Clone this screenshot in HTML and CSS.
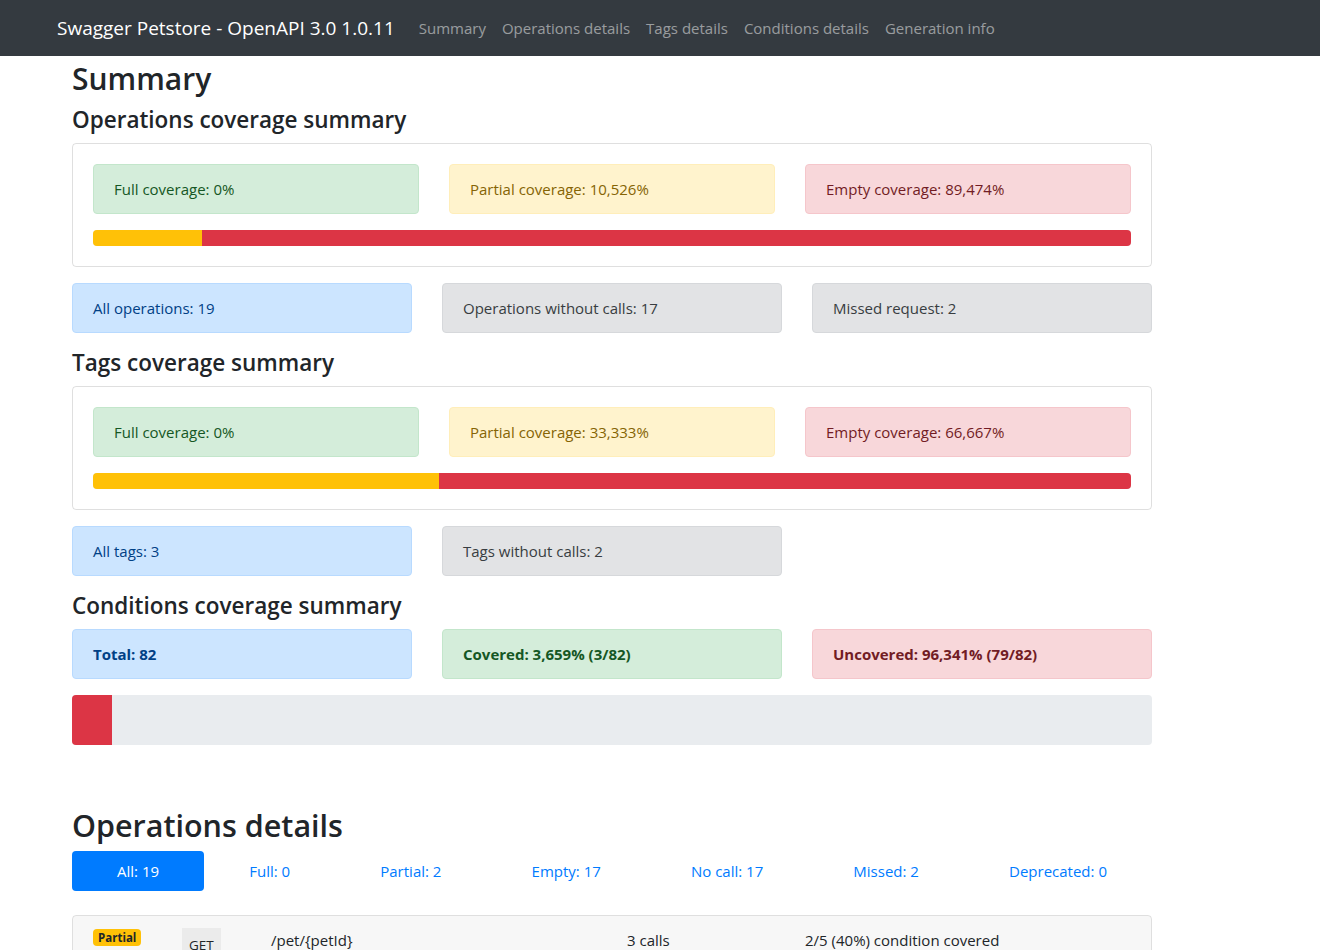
FILE: index.html
```html
<!DOCTYPE html>
<html lang="en">
<head>
<meta charset="utf-8">
<title>Swagger Petstore - OpenAPI 3.0 1.0.11</title>
<link rel="stylesheet" href="styles.css">
</head>
<body>
<nav class="navbar">
  <span class="brand">Swagger Petstore - OpenAPI 3.0 1.0.11</span>
  <ul class="nav-links">
    <li>Summary</li>
    <li>Operations details</li>
    <li>Tags details</li>
    <li>Conditions details</li>
    <li>Generation info</li>
  </ul>
</nav>
<main class="page">
  <h2 class="title">Summary</h2>

  <h4 class="sub">Operations coverage summary</h4>
  <div class="card">
    <div class="card-body">
      <div class="row3">
        <div class="alert success">Full coverage: 0%</div>
        <div class="alert warning">Partial coverage: 10,526%</div>
        <div class="alert danger">Empty coverage: 89,474%</div>
      </div>
      <div class="progress">
        <div class="bar bar-warning" style="width:10.526%"></div>
        <div class="bar bar-danger" style="width:89.474%"></div>
      </div>
    </div>
  </div>
  <div class="row3 stats">
    <div class="alert primary">All operations: 19</div>
    <div class="alert secondary">Operations without calls: 17</div>
    <div class="alert secondary">Missed request: 2</div>
  </div>

  <h4 class="sub">Tags coverage summary</h4>
  <div class="card">
    <div class="card-body">
      <div class="row3">
        <div class="alert success">Full coverage: 0%</div>
        <div class="alert warning">Partial coverage: 33,333%</div>
        <div class="alert danger">Empty coverage: 66,667%</div>
      </div>
      <div class="progress">
        <div class="bar bar-warning" style="width:33.333%"></div>
        <div class="bar bar-danger" style="width:66.667%"></div>
      </div>
    </div>
  </div>
  <div class="row3 stats">
    <div class="alert primary">All tags: 3</div>
    <div class="alert secondary">Tags without calls: 2</div>
  </div>

  <h4 class="sub">Conditions coverage summary</h4>
  <div class="row3 stats">
    <div class="alert primary strong">Total: 82</div>
    <div class="alert success strong">Covered: 3,659% (3/82)</div>
    <div class="alert danger strong">Uncovered: 96,341% (79/82)</div>
  </div>
  <div class="progress progress-lg">
    <div class="bar bar-danger" style="width:3.659%"></div>
  </div>

  <h1 class="section-title">Operations details</h1>
  <ul class="pills">
    <li class="pill active">All: 19</li>
    <li class="pill">Full: 0</li>
    <li class="pill">Partial: 2</li>
    <li class="pill">Empty: 17</li>
    <li class="pill">No call: 17</li>
    <li class="pill">Missed: 2</li>
    <li class="pill">Deprecated: 0</li>
  </ul>

  <div class="op-card">
    <div class="op-header">
      <div class="c1 cell-tight"><span class="badge badge-warning">Partial</span></div>
      <div class="c1 cell-tight"><span class="method">GET</span></div>
      <div class="c4">/pet/{petId}</div>
      <div class="c2">3 calls</div>
      <div class="c4">2/5 (40%) condition covered</div>
    </div>
  </div>
</main>
</body>
</html>
```

FILE: styles.css
```css
html, body {
  margin: 0;
  padding: 0;
  background: #fff;
}
body {
  font-family: "Open Sans", "Noto Sans", sans-serif;
  font-size: 15px;
  line-height: 24px;
  color: #212529;
  overflow: hidden;
}

.navbar {
  height: 56px;
  background: #343a40;
  display: flex;
  align-items: center;
  padding-left: 57px;
  box-sizing: border-box;
}
.brand {
  color: #fff;
  font-size: 19px;
  line-height: 30px;
  margin-right: 16px;
}
.nav-links {
  list-style: none;
  margin: 0;
  padding: 0;
  display: flex;
}
.nav-links li {
  padding: 8px 8px;
  color: rgba(255, 255, 255, 0.5);
  font-size: 15px;
}

.page {
  width: 1080px;
  margin-left: 72px;
  padding-top: 4px;
}

.title {
  font-size: 30px;
  line-height: 38.4px;
  font-weight: 600;
  margin: 0 0 8px;
}
.sub {
  font-size: 22.5px;
  line-height: 28.8px;
  font-weight: 600;
  margin: 0 0 8px;
}

.card {
  border: 1px solid rgba(0, 0, 0, 0.125);
  border-radius: 4px;
  margin-bottom: 16px;
}
.card-body {
  padding: 20px;
}

.row3 {
  display: grid;
  grid-template-columns: repeat(3, 1fr);
  column-gap: 30px;
}

.alert {
  padding: 12px 20px;
  border: 1px solid transparent;
  border-radius: 4px;
  margin-bottom: 16px;
}
.alert.strong { font-weight: 700; }
.success { background: #d4edda; border-color: #c3e6cb; color: #155724; }
.warning { background: #fff3cd; border-color: #ffeeba; color: #856404; }
.danger { background: #f8d7da; border-color: #f5c6cb; color: #721c24; }
.primary { background: #cce5ff; border-color: #b8daff; color: #004085; }
.secondary { background: #e2e3e5; border-color: #d6d8db; color: #383d41; }

.progress {
  display: flex;
  height: 16px;
  background: #e9ecef;
  border-radius: 4px;
  overflow: hidden;
}
.progress-lg {
  height: 50px;
}
.bar { height: 100%; }
.bar-warning { background: #ffc107; }
.bar-danger { background: #dc3545; }

.section-title {
  font-size: 30.5px;
  line-height: 42px;
  font-weight: 600;
  margin: 59px 0 5px;
}

.pills {
  list-style: none;
  margin: 0 0 24px;
  padding: 0;
  display: flex;
}
.pill {
  flex: 1 1 auto;
  text-align: center;
  padding: 8px 16px;
  color: #007bff;
  border-radius: 4px;
}
.pill.active {
  background: #007bff;
  color: #fff;
}

.op-card {
  border: 1px solid rgba(0, 0, 0, 0.125);
  border-radius: 4px;
  overflow: hidden;
}
.op-header {
  background: rgba(0, 0, 0, 0.03);
  padding: 12px 20px;
  display: grid;
  grid-template-columns: repeat(12, 1fr);
  column-gap: 30px;
  align-items: start;
  line-height: 24px;
}
.c1 { grid-column: span 1; }
.c2 { grid-column: span 2; }
.c4 { grid-column: span 4; }
.cell-tight { line-height: 0; }

.badge {
  display: inline-block;
  vertical-align: top;
  font-size: 11.5px;
  font-weight: 700;
  line-height: 12px;
  padding: 3px 5px 2px;
  border-radius: 4px;
  margin-top: 1px;
}
.badge-warning {
  background: #ffc107;
  color: #212529;
}
.method {
  display: inline-block;
  vertical-align: top;
  background: #ebebeb;
  font-size: 13.5px;
  line-height: 20px;
  padding: 7px 7px 6px;
  color: #212529;
}
```
